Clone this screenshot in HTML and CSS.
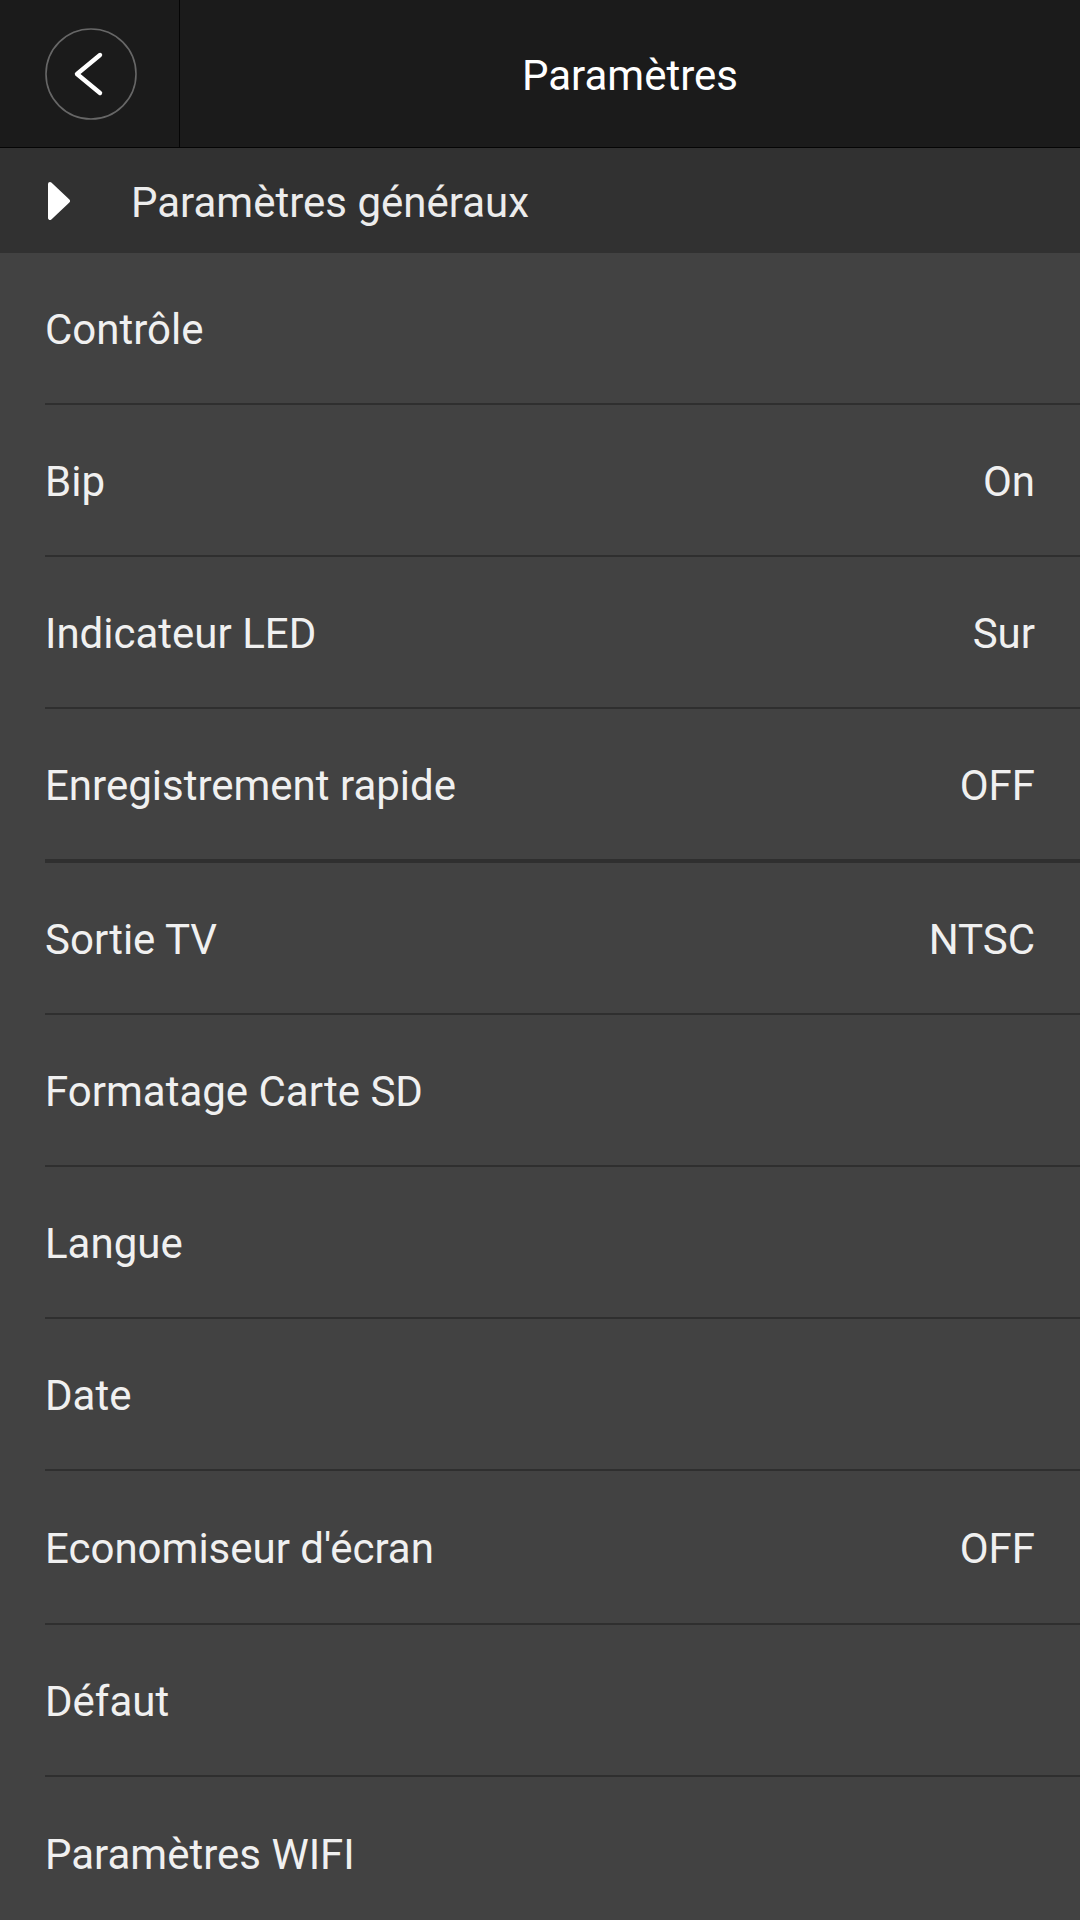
FILE: index.html
```html
<!DOCTYPE html>
<html lang="fr">
<head>
<meta charset="utf-8">
<title>Paramètres</title>
<link rel="stylesheet" href="styles.css">
</head>
<body>
<header class="topbar">
  <div class="back-cell">
    <svg class="back-icon" width="94" height="94" viewBox="0 0 94 94">
      <circle cx="47" cy="47" r="45" fill="none" stroke="#676767" stroke-width="1.6"/>
      <polyline points="56,28 33,47 56,66" fill="none" stroke="#ffffff" stroke-width="4.4" stroke-linecap="round" stroke-linejoin="round"/>
    </svg>
  </div>
  <div class="title">Paramètres</div>
</header>
<div class="section">
  <svg class="section-arrow" width="22" height="38" viewBox="0 0 22 38">
    <polygon points="2,2 20,19 2,36" fill="#ffffff" stroke="#ffffff" stroke-width="4" stroke-linejoin="round"/>
  </svg>
  <span class="section-label">Paramètres généraux</span>
</div>
<ul class="list">
  <li class="row"><span class="label">Contrôle</span></li>
  <li class="row"><span class="label">Bip</span><span class="value">On</span></li>
  <li class="row"><span class="label">Indicateur LED</span><span class="value">Sur</span></li>
  <li class="row row-thick"><span class="label">Enregistrement rapide</span><span class="value">OFF</span></li>
  <li class="row"><span class="label">Sortie TV</span><span class="value">NTSC</span></li>
  <li class="row"><span class="label">Formatage Carte SD</span></li>
  <li class="row"><span class="label">Langue</span></li>
  <li class="row"><span class="label">Date</span></li>
  <li class="row row-tall"><span class="label">Economiseur d'écran</span><span class="value">OFF</span></li>
  <li class="row"><span class="label">Défaut</span></li>
  <li class="row row-last"><span class="label">Paramètres WIFI</span></li>
</ul>
</body>
</html>
```

FILE: styles.css
```css
* {
  box-sizing: border-box;
}

html, body {
  margin: 0;
  padding: 0;
}

body {
  width: 1080px;
  height: 1920px;
  overflow: hidden;
  background: #424242;
  font-family: Roboto, "Noto Sans", "Liberation Sans", sans-serif;
  color: #f0f0f0;
}

.topbar {
  display: flex;
  height: 148px;
  background: #1b1b1b;
  border-bottom: 1px solid #050505;
}

.back-cell {
  width: 180px;
  flex: 0 0 180px;
  display: flex;
  align-items: center;
  justify-content: center;
  border-right: 1px solid #050505;
  padding-left: 2px;
}

.back-icon {
  display: block;
}

.title {
  flex: 1;
  display: flex;
  align-items: center;
  justify-content: center;
  font-size: 42px;
  color: #ffffff;
  padding-top: 4px;
}

.section {
  display: flex;
  align-items: center;
  height: 105px;
  background: #313131;
  padding-left: 48px;
  padding-top: 3px;
}

.section-arrow {
  display: block;
  margin-right: 61px;
  margin-top: -2px;
}

.section-label {
  font-size: 42px;
  color: #ececec;
}

.list {
  list-style: none;
  margin: 0;
  padding: 0;
}

.row {
  display: flex;
  align-items: center;
  justify-content: space-between;
  height: 152px;
  margin-left: 45px;
  padding-right: 45px;
  padding-top: 2px;
  border-bottom: 2px solid #2f2f2f;
  font-size: 42px;
}

.row-thick {
  border-bottom: 4px solid #2f2f2f;
  height: 154px;
}

.row-tall {
  height: 154px;
}

.row-last {
  border-bottom: none;
}

.label,
.value {
  color: #f0f0f0;
}
```
